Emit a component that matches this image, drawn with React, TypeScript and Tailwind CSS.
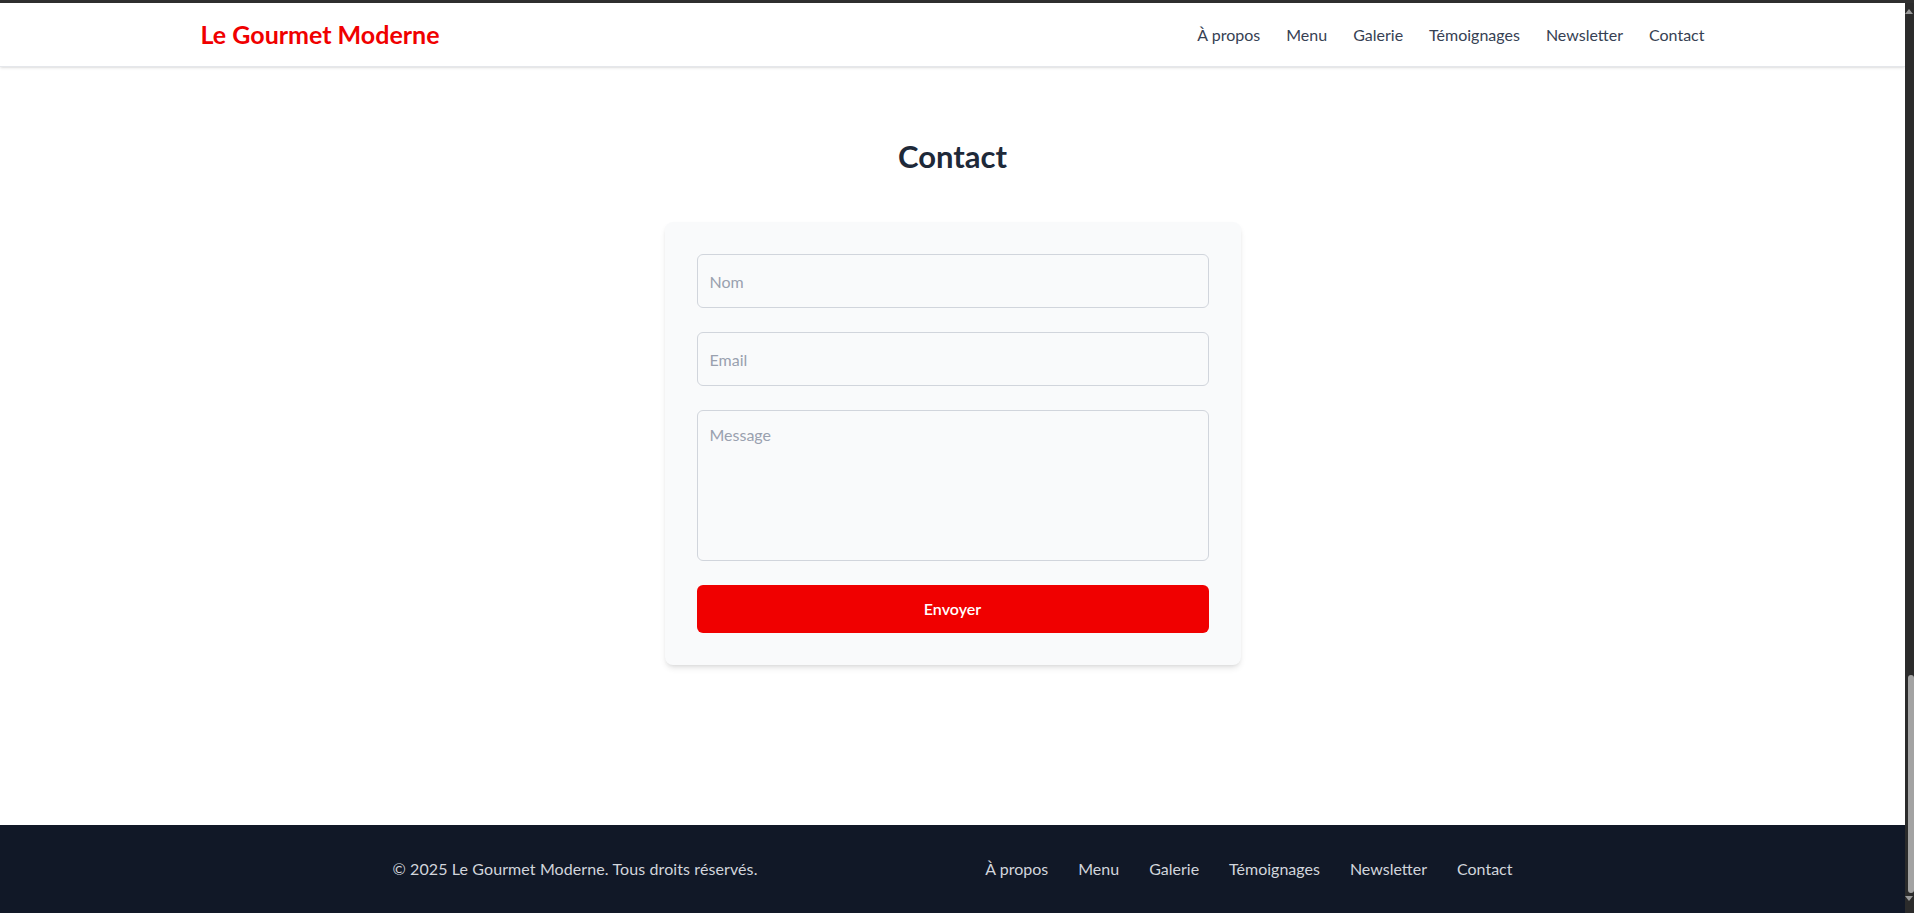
const NAV = ['À propos', 'Menu', 'Galerie', 'Témoignages', 'Newsletter', 'Contact']

function Header() {
  return (
    <header className="h-16 bg-white border-b border-gray-200 shadow-sm shrink-0">
      <div className="max-w-[1536px] mx-auto px-4 h-full flex items-center justify-between">
        <a href="#" className="text-[25px] font-bold text-[#f00000]">Le Gourmet Moderne</a>
        <nav className="flex items-center gap-[26px] text-gray-700">
          {NAV.map((item) => (
            <a key={item} href="#" className="hover:text-[#f00000]">{item}</a>
          ))}
        </nav>
      </div>
    </header>
  )
}

function ContactForm() {
  return (
    <section className="pt-[71px] flex flex-col items-center">
      <h2 className="text-[31px] leading-9 font-bold text-gray-800 mb-12">Contact</h2>
      <form className="w-full max-w-xl bg-gray-50 rounded-lg shadow-md p-8 flex flex-col gap-6">
        <input type="text" placeholder="Nom"
          className="w-full h-[54px] px-3 border border-gray-300 rounded-md placeholder:text-gray-400 outline-none" />
        <input type="email" placeholder="Email"
          className="w-full h-[54px] px-3 border border-gray-300 rounded-md placeholder:text-gray-400 outline-none" />
        <textarea placeholder="Message"
          className="w-full h-[151px] p-3 border border-gray-300 rounded-md placeholder:text-gray-400 outline-none resize-none" />
        <button type="button" className="w-full py-3 bg-[#f00000] text-white font-semibold rounded-md">
          Envoyer
        </button>
      </form>
    </section>
  )
}

function Footer() {
  return (
    <footer className="h-[88px] bg-[#111827] text-gray-300 shrink-0">
      <div className="max-w-6xl mx-auto px-4 h-full flex items-center justify-between">
        <p className="tracking-[0.1px]">© 2025 Le Gourmet Moderne. Tous droits réservés.</p>
        <nav className="flex items-center gap-[30px]">
          {NAV.map((item) => (
            <a key={item} href="#" className="hover:text-white">{item}</a>
          ))}
        </nav>
      </div>
    </footer>
  )
}

// fake window scrollbar, scrolled to the bottom
function Scrollbar() {
  return (
    <div className="w-[9px] bg-[#2b2b2b] flex flex-col items-end">
      <div className="mt-[6px] mr-[1px] w-0 h-0 border-l-[4px] border-r-[4px] border-b-[5px] border-l-transparent border-r-transparent border-b-[#9a9a9a]" />
      <div className="flex-1" />
      <div className="w-[6px] h-[218px] rounded-[3px] bg-[#a3a3a3]" />
      <div className="mt-[3px] mb-[12px] mr-[1px] w-0 h-0 border-l-[4px] border-r-[4px] border-t-[5px] border-l-transparent border-r-transparent border-t-[#9a9a9a]" />
    </div>
  )
}

export default function App() {
  return (
    <div className="h-[913px] flex flex-col bg-[#2b2b2b] overflow-hidden font-['Lato',sans-serif]">
      <div className="h-[3px] bg-[#2f2f2f] shrink-0" />
      <div className="flex-1 flex min-h-0">
        <div className="flex-1 flex flex-col bg-white min-w-0">
          <Header />
          <main className="flex-1">
            <ContactForm />
          </main>
          <Footer />
        </div>
        <Scrollbar />
      </div>
    </div>
  )
}
